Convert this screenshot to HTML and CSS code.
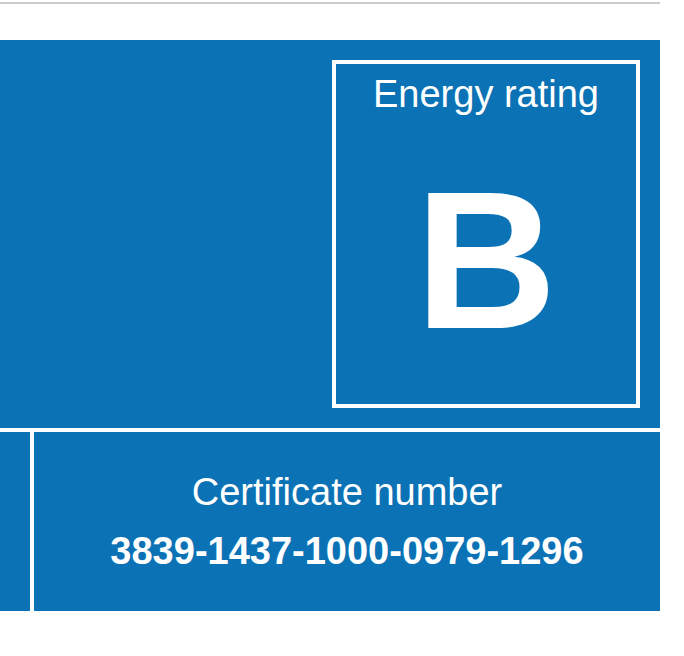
FILE: index.html
```
<!DOCTYPE html>
<html lang="en">

<head>
    <meta charset="UTF-8">
    <meta name="viewport" content="width=device-width, initial-scale=1.0">
    <title>Energy performance certificate</title>
    <link rel="stylesheet" href="styles.css">
</head>

<body>
<div class="page">
    <hr class="section-rule">

    <div class="epc-summary">
        <div class="epc-summary-top">
            <div class="rating-box">
                <p class="rating-label">Energy rating</p>
                <p class="rating-band">B</p>
            </div>
        </div>
        <div class="epc-summary-bottom">
            <div class="epc-cell"></div>
            <div class="epc-cell certificate">
                <p class="certificate-label">Certificate number</p>
                <p class="certificate-number">3839-1437-1000-0979-1296</p>
            </div>
        </div>
    </div>
</div>
</body>

</html>
```

FILE: styles.css
```
body {
    margin: 0;
    background-color: #fff;
    font-family: "Liberation Sans", Arial, sans-serif;
    color: #fff;
}

p {
    margin: 0;
}

.page {
    width: 660px;
}

.section-rule {
    margin: 2px 0 0;
    height: 2px;
    border: 0;
    background-color: #cbcbcb;
}

.epc-summary {
    margin-top: 36px;
    display: grid;
    gap: 4px;
    background-color: #fff;
}

.epc-summary-top {
    height: 388px;
    box-sizing: border-box;
    padding: 20px;
    background-color: #0b72b5;
    display: flex;
    justify-content: flex-end;
}

.rating-box {
    width: 308px;
    height: 348px;
    box-sizing: border-box;
    border: 4px solid #fff;
    padding-top: 8px;
    text-align: center;
}

.rating-label {
    font-size: 38px;
    line-height: 44px;
}

/* big band letter */
.rating-band {
    margin-top: 47px;
    font-size: 196px;
    line-height: 196px;
    font-weight: bold;
}

.epc-summary-bottom {
    height: 179px;
    display: grid;
    grid-template-columns: 30px 1fr;
    gap: 4px;
}

.epc-cell {
    background-color: #0b72b5;
}

.certificate {
    display: flex;
    flex-direction: column;
    justify-content: center;
    align-items: center;
}

.certificate-label {
    font-size: 38px;
    line-height: 44px;
}

.certificate-number {
    margin-top: 15px;
    font-size: 38px;
    line-height: 44px;
    font-weight: bold;
}
```
